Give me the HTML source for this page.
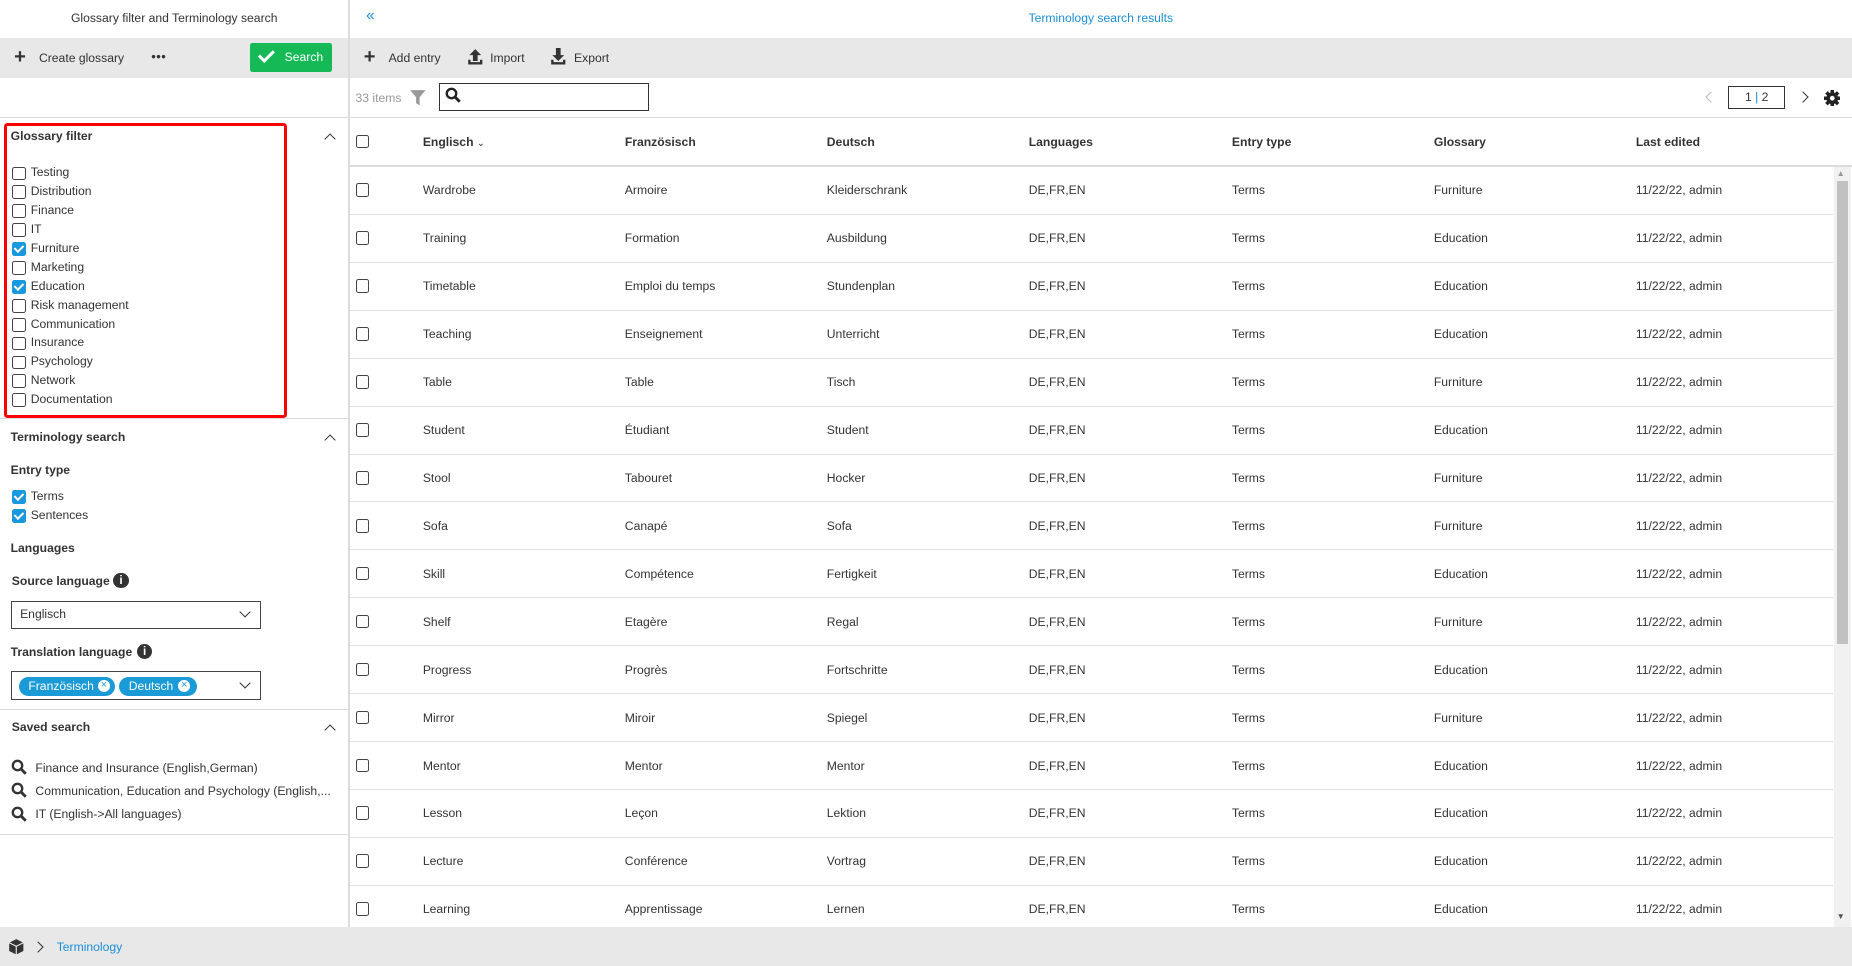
<!DOCTYPE html>
<html><head><meta charset="utf-8"><style>
html{zoom:1.18112}
body{margin:0;width:1568px;height:818px;position:relative;overflow:hidden;font-family:"Liberation Sans",sans-serif;font-size:10.3px;color:#333;background:#fff}
.a{position:absolute;white-space:nowrap}
.cb{position:absolute;width:10px;height:10px;border:1px solid #444;border-radius:2px;background:#fff}
.cb.on{background:#1a98de;border-color:#1a98de}
.cb.on:after{content:"";position:absolute;left:3px;top:0px;width:3px;height:6px;border:solid #fff;border-width:0 2px 2px 0;transform:rotate(45deg)}
.b{font-weight:bold}
.hl{position:absolute;height:1px;background:#dcdcdc}
.chev{position:absolute;width:6px;height:6px;border-left:1.5px solid #333;border-top:1.5px solid #333;transform:rotate(45deg)}
.dchev{position:absolute;width:6px;height:6px;border-right:1.5px solid #333;border-bottom:1.5px solid #333;transform:rotate(45deg)}
.row{position:absolute;left:296px;width:1256px;height:40px;border-bottom:1px solid #e0e0e0}
.row span{position:absolute;top:14px}
.row .cb{left:5px;top:14px}
</style></head><body>
<div class="a" style="left:0;width:295px;top:9px;text-align:center">Glossary filter and Terminology search</div>
<div class="a" style="left:310px;top:6px;color:#1a8fd6;font-size:13px">«</div>
<div class="a" style="left:296px;width:1272px;top:9px;text-align:center;color:#1a8fd6">Terminology search results</div>
<div style="position:absolute;left:295px;top:0;width:1px;height:785px;background:#dcdcdc"></div>
<div style="position:absolute;left:0;top:32px;width:1568px;height:34px;background:#e8e8e8"></div>
<div class="a b" style="left:12px;top:39px;font-size:17px">+</div>
<div class="a" style="left:33px;top:43px">Create glossary</div>
<div class="a b" style="left:128px;top:44px;font-size:7px;letter-spacing:0px">●●●</div>
<div style="position:absolute;left:212px;top:36px;width:69px;height:25px;background:#15b956;border-radius:2px;color:#fff">
<div class="a" style="left:10px;top:4px;width:5px;height:10px;border:solid #fff;border-width:0 3px 3px 0;transform:rotate(45deg)"></div>
<span class="a" style="left:29px;top:6px">Search</span></div>
<div style="position:absolute;left:295px;top:32px;width:1px;height:34px;background:#dcdcdc"></div>
<div class="a b" style="left:308px;top:39px;font-size:17px">+</div>
<div class="a" style="left:329px;top:43px">Add entry</div>
<svg class="a" style="left:395px;top:41px" width="14" height="15"><path d="M7 1L2 6h3v5h4V6h3z M1 10v4h12v-4h-2v2H3v-2z" fill="#333"/></svg>
<div class="a" style="left:415px;top:43px">Import</div>
<svg class="a" style="left:466px;top:41px" width="14" height="15"><path d="M5 0h4v6h3l-5 5-5-5h3z M1 10v4h12v-4h-2v2H3v-2z" fill="#333"/></svg>
<div class="a" style="left:486px;top:43px">Export</div>
<div class="a" style="left:301px;top:77px;color:#999">33 items</div>
<svg class="a" style="left:346px;top:75px" width="15" height="15"><path d="M1 1h13l-5 6v7l-3-2V7z" fill="#999"/></svg>
<div style="position:absolute;left:372px;top:70px;width:176px;height:22px;border:1px solid #333"></div>
<svg class="a" style="left:377px;top:74px" width="14" height="14"><circle cx="5.5" cy="5.5" r="4" fill="none" stroke="#222" stroke-width="2"/><path d="M8.5 8.5l4 4" stroke="#222" stroke-width="2.4"/></svg>
<div class="dchev" style="left:1445px;top:79px;transform:rotate(135deg);border-color:#bbb"></div>
<div style="position:absolute;left:1463px;top:73px;width:47px;height:18px;border:1px solid #333;text-align:center;line-height:18px">1 <span style="color:#1a8fd6">|</span> 2</div>
<div class="dchev" style="left:1523px;top:79px;transform:rotate(-45deg)"></div>
<svg class="a" style="left:1544px;top:76px" width="14" height="14" viewBox="0 0 14 14"><g fill="#222"><circle cx="7" cy="7" r="5"/><rect x="5.5" y="0" width="3" height="14"/><rect x="0" y="5.5" width="14" height="3"/><rect x="5.5" y="0" width="3" height="14" transform="rotate(45 7 7)"/><rect x="5.5" y="0" width="3" height="14" transform="rotate(-45 7 7)"/></g><circle cx="7" cy="7" r="2" fill="#fff"/></svg>
<div class="hl" style="left:0;top:99px;width:1568px"></div>
<div style="position:absolute;left:3px;top:104px;width:235px;height:245px;border:3px solid #f00;border-radius:3px"></div>
<div class="a b" style="left:9px;top:109px">Glossary filter</div>
<div class="chev" style="left:276px;top:114px"></div>
<div id="gl"></div>
<div class="hl" style="left:0;top:354px;width:295px"></div>
<div class="a b" style="left:9px;top:364px">Terminology search</div>
<div class="chev" style="left:276px;top:369px"></div>
<div class="a b" style="left:9px;top:392px">Entry type</div>
<div class="cb on" style="left:10px;top:415px"></div><div class="a" style="left:26px;top:414px">Terms</div>
<div class="cb on" style="left:10px;top:431px"></div><div class="a" style="left:26px;top:430px">Sentences</div>
<div class="a b" style="left:9px;top:458px">Languages</div>
<div class="a b" style="left:10px;top:486px">Source language</div>
<div class="a b" style="left:96px;top:485px;width:13px;height:13px;border-radius:50%;background:#333;color:#fff;text-align:center;font-size:10px;line-height:13px">i</div>
<div style="position:absolute;left:9px;top:509px;width:210px;height:22px;border:1px solid #444"></div>
<div class="a" style="left:17px;top:514px">Englisch</div>
<div class="dchev" style="left:204px;top:515px"></div>
<div class="a b" style="left:9px;top:546px">Translation language</div>
<div class="a b" style="left:116px;top:545px;width:13px;height:13px;border-radius:50%;background:#333;color:#fff;text-align:center;font-size:10px;line-height:13px">i</div>
<div style="position:absolute;left:9px;top:568px;width:210px;height:23px;border:1px solid #444"></div>
<div class="a" style="left:16px;top:573px;width:81px;height:16px;border-radius:8px;background:#1a9ad6;color:#fff;line-height:16px;padding-left:8px;box-sizing:border-box">Französisch<span style="position:absolute;left:67px;top:3px;width:10px;height:10px;border-radius:50%;background:#fff;color:#1a9ad6;font-size:9px;line-height:10px;text-align:center">×</span></div>
<div class="a" style="left:101px;top:573px;width:66px;height:16px;border-radius:8px;background:#1a9ad6;color:#fff;line-height:16px;padding-left:8px;box-sizing:border-box">Deutsch<span style="position:absolute;left:50px;top:3px;width:10px;height:10px;border-radius:50%;background:#fff;color:#1a9ad6;font-size:9px;line-height:10px;text-align:center">×</span></div>
<div class="dchev" style="left:204px;top:575px"></div>
<div class="hl" style="left:0;top:600px;width:295px"></div>
<div class="a b" style="left:10px;top:610px">Saved search</div>
<div class="chev" style="left:276px;top:615px"></div>
<svg class="a" style="left:9px;top:643px" width="14" height="14"><circle cx="5.5" cy="5.5" r="4" fill="none" stroke="#333" stroke-width="2"/><path d="M8.5 8.5l4 4" stroke="#333" stroke-width="2.4"/></svg>
<div class="a" style="left:30px;top:644px">Finance and Insurance (English,German)</div>
<svg class="a" style="left:9px;top:662px" width="14" height="14"><circle cx="5.5" cy="5.5" r="4" fill="none" stroke="#333" stroke-width="2"/><path d="M8.5 8.5l4 4" stroke="#333" stroke-width="2.4"/></svg>
<div class="a" style="left:30px;top:664px">Communication, Education and Psychology (English,...</div>
<svg class="a" style="left:9px;top:682px" width="14" height="14"><circle cx="5.5" cy="5.5" r="4" fill="none" stroke="#333" stroke-width="2"/><path d="M8.5 8.5l4 4" stroke="#333" stroke-width="2.4"/></svg>
<div class="a" style="left:30px;top:683px">IT (English-&gt;All languages)</div>
<div class="hl" style="left:0;top:706px;width:295px"></div>
<div class="cb" style="left:301px;top:114px"></div>
<div class="a b" style="left:358px;top:114px">Englisch <span style="font-size:8px;font-weight:normal">⌄</span></div>
<div class="a b" style="left:529px;top:114px">Französisch</div>
<div class="a b" style="left:700px;top:114px">Deutsch</div>
<div class="a b" style="left:871px;top:114px">Languages</div>
<div class="a b" style="left:1043px;top:114px">Entry type</div>
<div class="a b" style="left:1214px;top:114px">Glossary</div>
<div class="a b" style="left:1385px;top:114px">Last edited</div>
<div class="hl" style="left:296px;top:140px;width:1272px"></div>
<div id="rows"></div>
<div style="position:absolute;left:1553px;top:141px;width:14px;height:644px;background:#f1f1f1"></div>
<div style="position:absolute;left:1555px;top:153px;width:10px;height:392px;background:#c1c1c1"></div>
<div class="a" style="left:1555px;top:143px;font-size:7px;color:#999">▲</div>
<div class="a" style="left:1555px;top:772px;font-size:7px;color:#555">▼</div>
<div style="position:absolute;left:0;top:785px;width:1568px;height:33px;background:#e8e8e8"></div>
<svg class="a" style="left:7px;top:794px" width="14" height="15"><path d="M7 1l6 3v7l-6 3-6-3V4z" fill="#333"/><path d="M1 4l6 3 6-3M7 7v7" stroke="#e8e8e8" stroke-width="1" fill="none"/></svg>
<div class="dchev" style="left:29px;top:798px;transform:rotate(-45deg)"></div>
<div class="a" style="left:48px;top:796px;color:#1a8fd6">Terminology</div>
<script>
var g=["Testing","Distribution","Finance","IT","Furniture","Marketing","Education","Risk management","Communication","Insurance","Psychology","Network","Documentation"],h="";
g.forEach(function(n,i){var y=141+i*16;h+='<div class="cb'+((n=="Furniture"||n=="Education")?' on':'')+'" style="left:10px;top:'+y+'px"></div><div class="a" style="left:26px;top:'+(y-1)+'px">'+n+'</div>';});
document.getElementById("gl").innerHTML=h;
var d=[["Wardrobe","Armoire","Kleiderschrank","Furniture"],["Training","Formation","Ausbildung","Education"],["Timetable","Emploi du temps","Stundenplan","Education"],["Teaching","Enseignement","Unterricht","Education"],["Table","Table","Tisch","Furniture"],["Student","Étudiant","Student","Education"],["Stool","Tabouret","Hocker","Furniture"],["Sofa","Canapé","Sofa","Furniture"],["Skill","Compétence","Fertigkeit","Education"],["Shelf","Etagère","Regal","Furniture"],["Progress","Progrès","Fortschritte","Education"],["Mirror","Miroir","Spiegel","Furniture"],["Mentor","Mentor","Mentor","Education"],["Lesson","Leçon","Lektion","Education"],["Lecture","Conférence","Vortrag","Education"],["Learning","Apprentissage","Lernen","Education"]];
h="";d.forEach(function(r,i){var y=141+i*40.6;h+='<div class="row" style="top:'+y+'px"><div class="cb"></div><span style="left:62px">'+r[0]+'</span><span style="left:233px">'+r[1]+'</span><span style="left:404px">'+r[2]+'</span><span style="left:575px">DE,FR,EN</span><span style="left:747px">Terms</span><span style="left:918px">'+r[3]+'</span><span style="left:1089px">11/22/22, admin</span></div>';});
document.getElementById("rows").innerHTML=h;
</script>
</body></html>
